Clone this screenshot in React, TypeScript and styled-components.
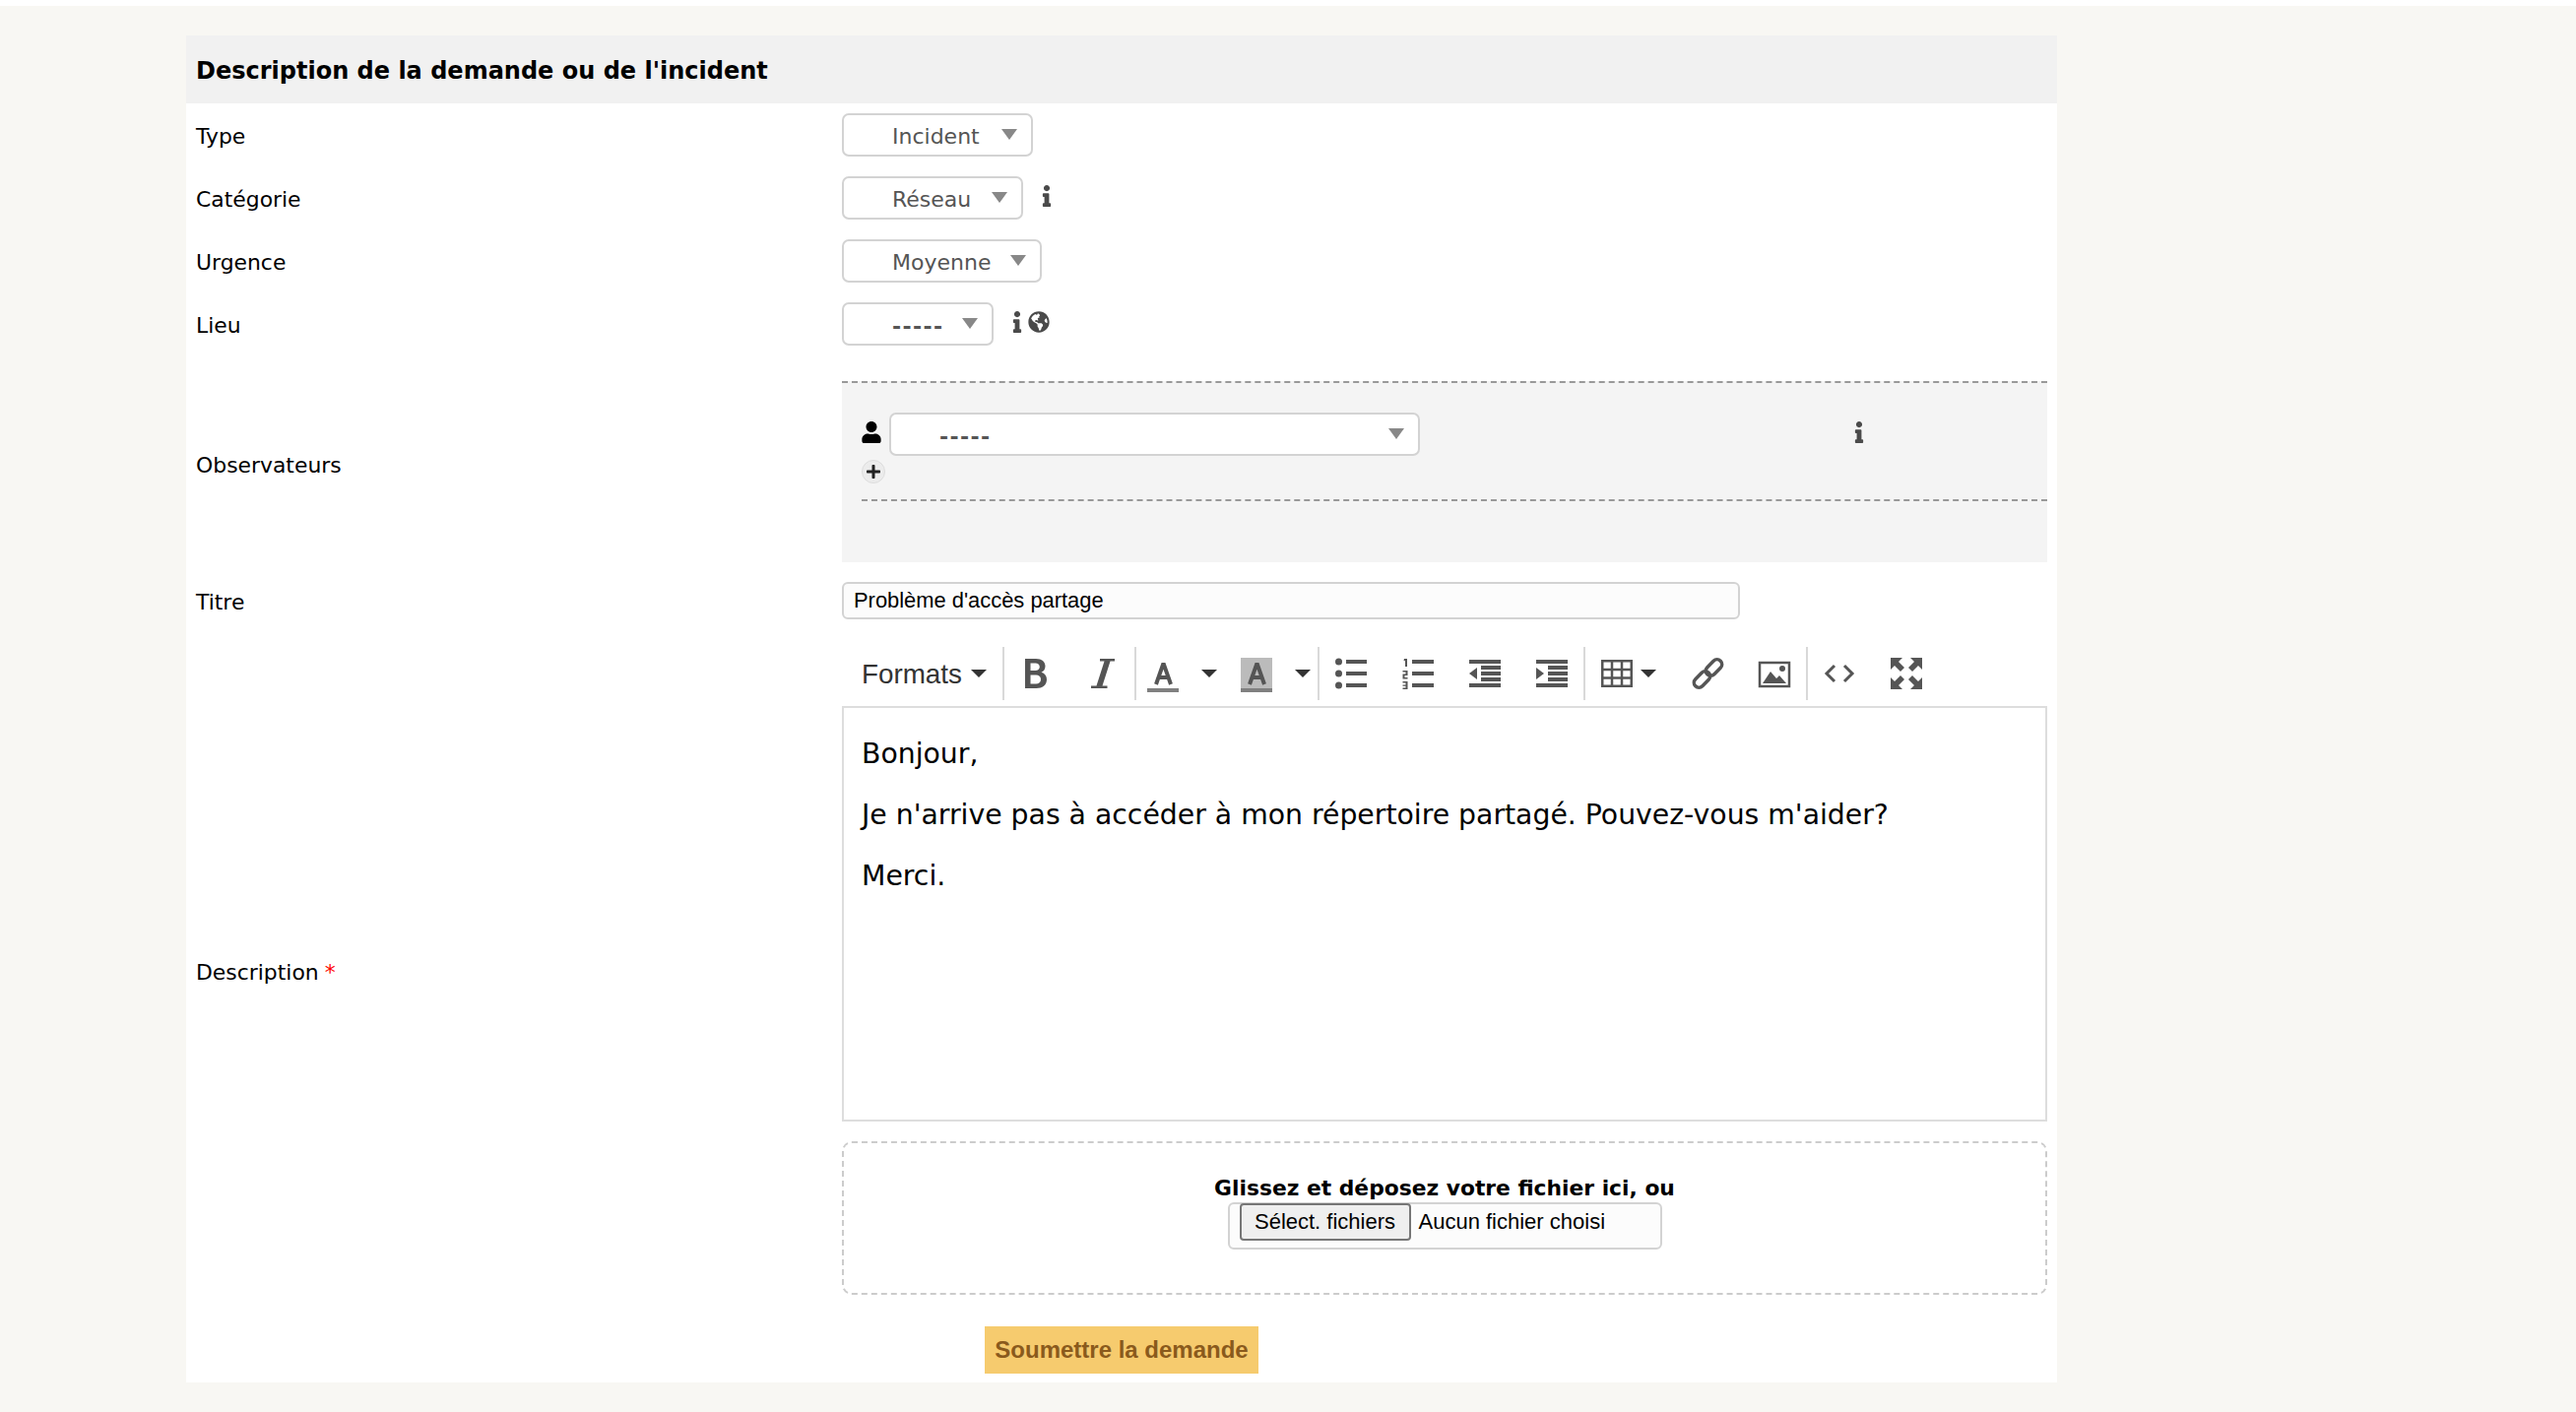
import React from 'react';
import styled, { createGlobalStyle } from 'styled-components';
import { FaInfo, FaUser, FaPlus, FaGlobeAmericas } from 'react-icons/fa';

const Global = createGlobalStyle`
  html, body { margin: 0; padding: 0; background: #f8f7f3; }
  body { font-family: "DejaVu Sans", sans-serif; }
  * { box-sizing: border-box; }
`;

const Page = styled.div`
  width: 2616px;
  height: 1434px;
  overflow: hidden;
  background: #f8f7f3;
`;
const TopStrip = styled.div`
  height: 6px;
  background: #fff;
`;
const Card = styled.main`
  width: 1900px;
  height: 1368px;
  margin: 30px 0 0 189px;
  background: #fff;
`;
const Heading = styled.h2`
  margin: 0;
  height: 69px;
  padding: 2px 10px 0;
  display: flex;
  align-items: center;
  background: #f1f1f1;
  font-size: 24px;
  font-weight: 700;
  color: #000;
`;
const Row = styled.div<{ $top?: number; $bottom?: number }>`
  display: grid;
  grid-template-columns: 666px 1fr;
  padding: ${p => p.$top ?? 10}px 10px ${p => p.$bottom ?? 10}px 0;
  align-items: center;
`;
const Label = styled.label`
  padding: 3px 0 0 10px;
  font-size: 21.9px;
  color: #000;
`;
const Required = styled.span`
  color: #f00;
  margin-left: 6px;
`;
const Field = styled.div`
  display: flex;
  align-items: flex-start;
  gap: 13px;
  min-width: 0;
`;
const Select = styled.div<{ $width: number }>`
  position: relative;
  flex: none;
  width: ${p => p.$width}px;
  height: 44px;
  padding: 3px 0 0 49px;
  display: flex;
  align-items: center;
  background: #fff;
  border: 2px solid #d3d3d3;
  border-radius: 7px;
  font-size: 22px;
  color: #555;
`;
const Dashes = styled.span`
  letter-spacing: 1.4px;
  font-weight: 700;
  position: relative;
  top: 1px;
`;
const Caret = styled.span`
  position: absolute;
  right: 14px;
  top: 14px;
  width: 0;
  height: 0;
  border-left: 8px solid transparent;
  border-right: 8px solid transparent;
  border-top: 11px solid #888;
`;
const InfoIcons = styled.span`
  display: flex;
  margin-top: 9px;
  color: #4a4a4a;
  font-size: 22px;
`;
const Observers = styled.div`
  height: 184px;
  margin-top: 16px;
  background: #f4f4f4;
  border-top: 2px dashed #999;
  padding: 30px 0 0 20px;
`;
const ObserverRow = styled.div`
  display: flex;
  align-items: flex-start;
  height: 48px;
  color: #000;
`;
const PersonSlot = styled.span`
  width: 29px;
  flex: none;
  margin: 9px 0 0 -1px;
  font-size: 22px;
`;
const ObserverInfo = styled.span`
  margin: 9px 0 0 435px;
  font-size: 22px;
  color: #4a4a4a;
`;
const PlusButton = styled.span`
  display: flex;
  width: 24px;
  height: 24px;
  align-items: center;
  justify-content: center;
  background: #ececec;
  border: 1px solid #ddd;
  border-radius: 12px;
  font-size: 16px;
  color: #222;
`;
const ObserverRule = styled.div`
  margin-top: 16px;
  border-top: 2px dashed #999;
`;
const TitleInput = styled.input`
  display: block;
  width: 912px;
  height: 38px;
  padding: 0 10px;
  background: #fcfcfc;
  border: 2px solid #d3d3d3;
  border-radius: 6px;
  font-family: "Liberation Sans", sans-serif;
  font-size: 21.9px;
  color: #000;
  outline: none;
`;
const Toolbar = styled.div`
  display: flex;
  height: 56px;
  margin-bottom: 4px;
  padding-bottom: 2px;
`;
const Group = styled.div<{ $left?: number; $right?: number; $last?: boolean }>`
  display: flex;
  align-items: center;
  padding: 0 ${p => p.$right ?? 17}px 0 ${p => p.$left ?? 15}px;
  gap: 36px;
  box-shadow: ${p => (p.$last ? 'none' : '1px 0 0 #d9d9d9, inset -1px 0 0 #d9d9d9')};
  margin-right: 2px;
`;
const FormatsLabel = styled.span`
  position: relative;
  top: 1px;
  font-family: "Liberation Sans", sans-serif;
  font-size: 27.8px;
  color: #333;
`;
const Split = styled.span<{ $gap?: number }>`
  display: flex;
  align-items: center;
  gap: ${p => p.$gap ?? 23}px;
`;
const SplitCaret = styled.span`
  width: 0;
  height: 0;
  border-left: 8px solid transparent;
  border-right: 8px solid transparent;
  border-top: 8px solid #333;
`;
const ColorPair = styled.span`
  display: flex;
  gap: 24px;
`;
const IconSvg = styled.svg`
  flex: none;
  width: 32px;
  height: 32px;
  overflow: visible;
  fill: #555;
`;
const Editor = styled.div`
  height: 422px;
  padding: 30px 18px;
  border: 2px solid #ddd;
  font-size: 28.3px;
  color: #000;
`;
const Para = styled.p`
  margin: 0 0 28px;
  line-height: 34px;
`;
const DropZone = styled.div`
  height: 156px;
  margin-top: 20px;
  padding-top: 32px;
  display: flex;
  flex-direction: column;
  align-items: center;
  border: 2px dashed #ccc;
  border-radius: 10px;
`;
const DropText = styled.div`
  font-size: 21.8px;
  font-weight: 700;
  line-height: 28px;
  color: #000;
`;
const FileBox = styled.div`
  width: 441px;
  height: 48px;
  padding: 0 0 8px 10px;
  display: flex;
  align-items: center;
  gap: 8px;
  background: #fcfcfc;
  border: 2px solid #d3d3d3;
  border-radius: 6px;
  font-family: "Liberation Sans", sans-serif;
  font-size: 22px;
  color: #000;
`;
const FileButton = styled.button`
  width: 174px;
  height: 38px;
  padding: 0;
  background: #efefef;
  border: 2px solid #767676;
  border-radius: 4px;
  font: inherit;
  color: #000;
`;
const Submit = styled.button`
  display: block;
  width: 278px;
  height: 48px;
  margin-left: 145px;
  padding: 0;
  background: #f6cb6e;
  border: 0;
  font-family: "Liberation Sans", sans-serif;
  font-size: 24px;
  font-weight: 700;
  color: #8a5a1c;
`;

const Letter = ({ bg }: { bg?: boolean }) => (
  <IconSvg viewBox="0 0 32 32">
    {bg && <rect x="0" y="0" width="32" height="31" fill="#bbb" />}
    <path d="M9 27 L16 7 L17 7 L24 27 M11.500 20 H21.500" fill="none" stroke="#555" strokeWidth="4" />
    <rect x="0" y="31" width="32" height="4" fill="#808080" />
  </IconSvg>
);

const Bars = ({ x, rows }: { x: number; rows: number[] }) => (
  <>
    {rows.map(y => (
      <rect key={y} x={x} y={y} width={32 - x} height="4" />
    ))}
  </>
);

export default function App() {
  return (
    <Page>
      <Global />
      <TopStrip />
      <Card>
        <Heading>Description de la demande ou de l'incident</Heading>
        <Row>
          <Label>Type</Label>
          <Field>
            <Select $width={194}>Incident<Caret /></Select>
          </Field>
        </Row>
        <Row>
          <Label>Catégorie</Label>
          <Field>
            <Select $width={184}>Réseau<Caret /></Select>
            <InfoIcons><FaInfo /></InfoIcons>
          </Field>
        </Row>
        <Row>
          <Label>Urgence</Label>
          <Field>
            <Select $width={203}>Moyenne<Caret /></Select>
          </Field>
        </Row>
        <Row>
          <Label>Lieu</Label>
          <Field>
            <Select $width={154}><Dashes>-----</Dashes><Caret /></Select>
            <InfoIcons><FaInfo /><FaGlobeAmericas /></InfoIcons>
          </Field>
        </Row>
        <Row>
          <Label>Observateurs</Label>
          <Observers>
            <ObserverRow>
              <PersonSlot><FaUser /></PersonSlot>
              <Select $width={539}><Dashes>-----</Dashes><Caret /></Select>
              <ObserverInfo><FaInfo /></ObserverInfo>
            </ObserverRow>
            <PlusButton><FaPlus /></PlusButton>
            <ObserverRule />
          </Observers>
        </Row>
        <Row>
          <Label>Titre</Label>
          <TitleInput readOnly value="Problème d'accès partage" />
        </Row>
        <Row $top={18} $bottom={23}>
          <Label>Description<Required>*</Required></Label>
          <div>
            <Toolbar>
              <Group $left={20} $right={17}>
                <Split $gap={9}><FormatsLabel>Formats</FormatsLabel><SplitCaret /></Split>
              </Group>
              <Group>
                <IconSvg viewBox="0 0 32 32">
                  <path fillRule="evenodd" d="M5 1h11c6 0 9.500 3 9.500 7.500 0 3-1.500 5.300-4 6.300 3.500 1 5.500 3.700 5.500 7.200C27 28 22.500 31 16.500 31H5zM10.500 5.500v7.500h5c2.500 0 4.300-1.500 4.300-3.800s-1.800-3.700-4.300-3.700zM10.500 17.500v9h5.500c3 0 5-1.700 5-4.500s-2-4.500-5-4.500z" />
                </IconSvg>
                <IconSvg viewBox="0 0 32 32">
                  <path d="M13 1h15v2.500h-4.500L15.500 28.500h5V31H4v-2.500h5.500L17.500 3.500H13z" />
                </IconSvg>
              </Group>
              <Group $left={10} $right={8}>
                <ColorPair>
                  <Split><Letter /><SplitCaret /></Split>
                  <Split><Letter bg /><SplitCaret /></Split>
                </ColorPair>
              </Group>
              <Group>
                <IconSvg viewBox="0 0 32 32">
                  <circle cx="3.500" cy="4" r="3.500" />
                  <circle cx="3.500" cy="16" r="3.500" />
                  <circle cx="3.500" cy="28" r="3.500" />
                  <Bars x={11} rows={[2, 14, 26]} />
                </IconSvg>
                <IconSvg viewBox="0 0 32 32">
                  <path d="M2 1h3v8H3V3H1.500zM0.500 13h5v5H2.500v2h3v1.500h-5v-5h3v-2h-3zM0.500 24h5v8h-5v-1.500h3v-1.700h-3v-1.300h3v-2h-3z" />
                  <Bars x={10} rows={[2, 14, 26]} />
                </IconSvg>
                <IconSvg viewBox="0 0 32 32">
                  <Bars x={0} rows={[2, 26]} />
                  <Bars x={12} rows={[8, 14, 20]} />
                  <path d="M8 10v12L0 16z" />
                </IconSvg>
                <IconSvg viewBox="0 0 32 32">
                  <Bars x={0} rows={[2, 26]} />
                  <Bars x={12} rows={[8, 14, 20]} />
                  <path d="M0 10v12l8-6z" />
                </IconSvg>
              </Group>
              <Group>
                <Split $gap={8}>
                  <IconSvg viewBox="0 0 32 32">
                    <g fill="none" stroke="#555" strokeWidth="2.500">
                      <rect x="1.250" y="3.250" width="29.500" height="25.500" />
                      <path d="M11 3v26M21 3v26M1 12h30M1 20.500h30" />
                    </g>
                  </IconSvg>
                  <SplitCaret />
                </Split>
                <IconSvg viewBox="0 0 32 32">
                  <g fill="none" stroke="#555" strokeWidth="3.500">
                    <rect x="1" y="17" width="19" height="10" rx="5" transform="rotate(-45 10.500 22)" />
                    <rect x="13" y="5" width="19" height="10" rx="5" transform="rotate(-45 22.500 10)" />
                  </g>
                </IconSvg>
                <IconSvg viewBox="0 0 32 32">
                  <rect x="1" y="5" width="30" height="24" fill="none" stroke="#555" strokeWidth="2.500" />
                  <path d="M4 26l8-12 6 7 3-3 7 8z" />
                  <circle cx="24" cy="11" r="3" />
                </IconSvg>
              </Group>
              <Group $last>
                <IconSvg viewBox="0 0 32 32">
                  <path d="M11 8L3 16l8 8M21 8l8 8-8 8" fill="none" stroke="#555" strokeWidth="3" />
                </IconSvg>
                <IconSvg viewBox="0 0 32 32">
                  <path d="M0 0h12L8 4l6 6-4 4-6-6-4 4zM32 0v12l-4-4-6 6-4-4 6-6-4-4zM32 32H20l4-4-6-6 4-4 6 6 4-4zM0 32V20l4 4 6-6 4 4-6 6 4 4z" />
                </IconSvg>
              </Group>
            </Toolbar>
            <Editor>
              <Para>Bonjour,</Para>
              <Para>Je n'arrive pas à accéder à mon répertoire partagé. Pouvez-vous m'aider?</Para>
              <Para>Merci.</Para>
            </Editor>
            <DropZone>
              <DropText>Glissez et déposez votre fichier ici, ou</DropText>
              <FileBox>
                <FileButton>Sélect. fichiers</FileButton>
                Aucun fichier choisi
              </FileBox>
            </DropZone>
          </div>
        </Row>
        <Row $top={9}>
          <span />
          <Submit>Soumettre la demande</Submit>
        </Row>
      </Card>
    </Page>
  );
}
